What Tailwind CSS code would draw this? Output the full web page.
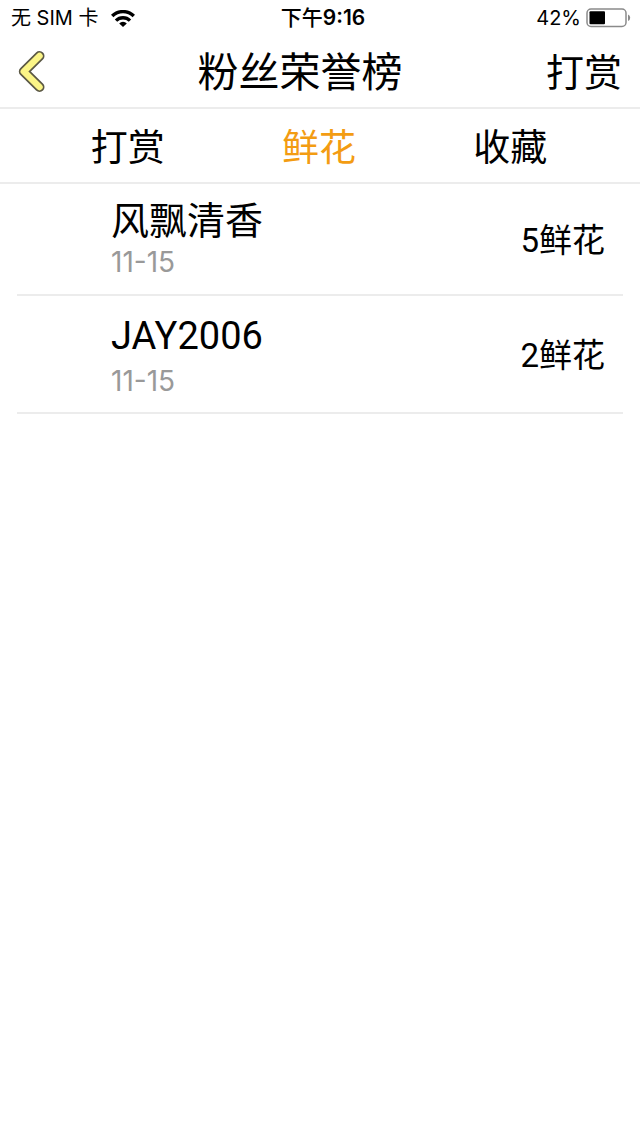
<!DOCTYPE html>
<html lang="zh-CN">
<head>
  <meta charset="UTF-8">
  <meta name="viewport" content="width=device-width, initial-scale=1.0">
  <title>粉丝荣誉榜</title>
  <script src="https://cdn.jsdelivr.net/npm/@tailwindcss/browser@4"></script>
</head>
<body class="bg-white text-black min-h-screen font-['Inter','Noto_Sans_CJK_SC',sans-serif]">

  <!-- Status bar -->
  <div class="grid grid-cols-3 items-center h-9 pl-[11px] pr-[9px] text-[20px] leading-9">
    <div class="flex items-center gap-3">
      <span>无 SIM 卡</span>
      <svg class="w-6 h-[17px]" viewBox="0 0 24 17" fill="none" stroke="#000" stroke-width="3.4">
        <path d="M1.200 6a15.400 15.400 0 0 1 21.600 0" />
        <path d="M5 10.600a10 10 0 0 1 14 0" />
        <path d="M8.200 13.400a5.400 5.400 0 0 1 7.600 0L12 17z" fill="#000" stroke="none" />
      </svg>
    </div>
    <span class="pl-1 text-center text-[21px] font-semibold"><span class="font-medium">下午</span>9:16</span>
    <div class="flex items-center justify-end gap-1">
      <span>42%</span>
      <svg class="w-[46px] h-5" viewBox="0 0 46 20" fill="none">
        <rect x="2" y="1" width="39" height="17.500" rx="4" stroke="#8a8a8a" stroke-width="1.500" />
        <rect x="4.500" y="3.200" width="15.500" height="13" rx="1" fill="#000" />
        <path d="M43 6.500q2.200 .8 2.200 3.300T43 13z" fill="#8a8a8a" />
      </svg>
    </div>
  </div>

  <!-- Header -->
  <header class="flex items-center justify-between h-[73px] px-[18px] border-b-2 border-[#ececec]">
    <button type="button" aria-label="返回" class="w-9 h-[42px]">
      <svg class="w-7 h-[42px]" viewBox="0 0 28 42" fill="none" stroke-linecap="round" stroke-linejoin="round">
        <path d="M21.500 5L5.800 20.500L21.500 36" stroke="#5c5945" stroke-width="10" />
        <path d="M21.500 5L5.800 20.500L21.500 36" stroke="#fbf587" stroke-width="6.500" />
      </svg>
    </button>
    <h1 class="text-[41px] leading-[60px]">粉丝荣誉榜</h1>
    <button type="button" class="text-[38px] leading-[60px]">打赏</button>
  </header>

  <!-- Tabs -->
  <nav class="grid grid-cols-3 h-[75px] pt-[3px] pl-8 pr-[34px] border-b-2 border-[#ececec] text-[37px] leading-[72px]">
    <button type="button">打赏</button>
    <button type="button" class="text-[#f39c12]">鲜花</button>
    <button type="button">收藏</button>
  </nav>

  <!-- Fans -->
  <ul class="px-[17px]">
    <li class="flex items-center justify-between h-28 pl-[94px] pr-[18px] border-b-2 border-[#ececec]">
      <div class="pb-1">
        <p class="text-[38px] leading-[50px] font-['Roboto','Noto_Sans_CJK_SC',sans-serif]">风飘清香</p>
        <time datetime="11-15" class="block text-[28px] leading-8 text-[#999]">11-15</time>
      </div>
      <span class="pt-1 text-[33px] font-['Roboto','Noto_Sans_CJK_SC',sans-serif]">5鲜花</span>
    </li>
    <li class="flex items-center justify-between h-[118px] pl-[94px] pr-[18px] border-b-2 border-[#ececec]">
      <div class="flex flex-col gap-1">
        <p class="text-[38px] leading-[50px] font-['Roboto','Noto_Sans_CJK_SC',sans-serif]">JAY2006</p>
        <time datetime="11-15" class="block text-[28px] leading-8 text-[#999]">11-15</time>
      </div>
      <span class="pt-1 text-[33px] font-['Roboto','Noto_Sans_CJK_SC',sans-serif]">2鲜花</span>
    </li>
  </ul>

</body>
</html>
